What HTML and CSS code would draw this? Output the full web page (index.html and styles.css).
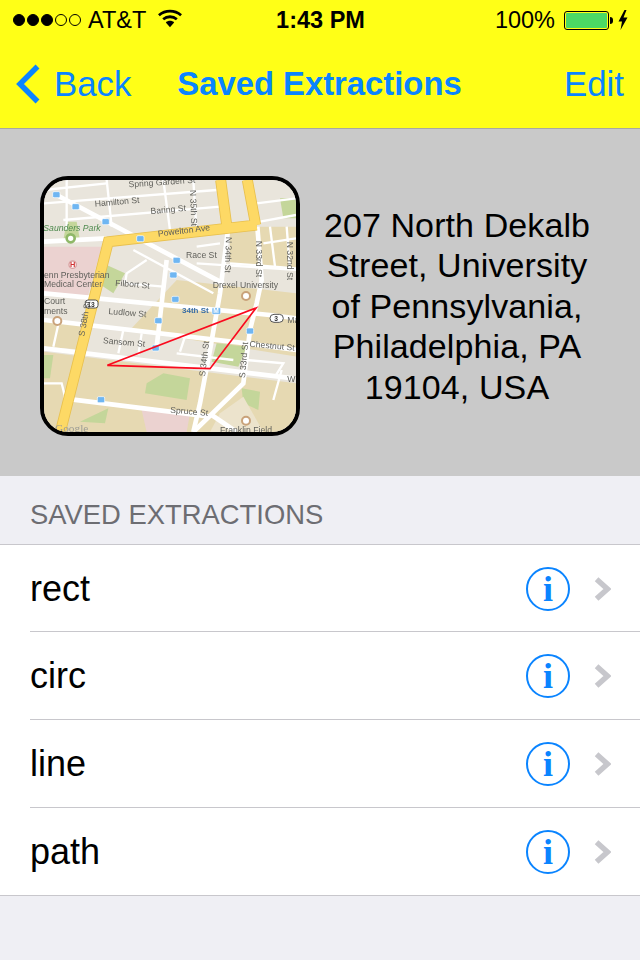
FILE: index.html
```html
<!DOCTYPE html>
<html lang="en">
<head>
<meta charset="utf-8">
<title>Saved Extractions</title>
<link rel="stylesheet" href="styles.css">
</head>
<body>
<div class="screen">
  <header class="top">
    <div class="status">
      <div class="status-left">
        <div class="signal"><i class="dot on"></i><i class="dot on"></i><i class="dot on"></i><i class="dot"></i><i class="dot"></i></div>
        <span class="carrier">AT&amp;T</span>
        <svg class="wifi" viewBox="0 0 26 20"><path d="M1 6.5C8 .6 18 .6 25 6.5" /><path d="M5.6 10.8C10 7.2 16 7.2 20.4 10.8" /><path class="wedge" d="M8.5 14.2C11 12 15 12 17.5 14.2L13 19.5Z"/></svg>
      </div>
      <div class="time">1:43 PM</div>
      <div class="status-right">
        <span class="pct">100%</span>
        <div class="battery"><div class="fill"></div></div>
        <div class="nub"></div>
        <svg class="bolt" viewBox="0 0 10 20"><path d="M6.5 0L0.5 11.5H4L2.5 20L9.5 7.5H5.5L8.5 0Z"/></svg>
      </div>
    </div>
    <nav class="nav">
      <a class="back"><svg class="chev" viewBox="0 0 26 40"><path d="M22.5 2.5L5 20L22.5 37.5"/></svg><span>Back</span></a>
      <h1 class="title">Saved Extractions</h1>
      <a class="edit">Edit</a>
    </nav>
  </header>

  <section class="hero">
    <div class="thumb">
      <svg class="map" viewBox="42 30 756 756">
        <rect class="m-bg" x="42" y="30" width="756" height="756"/>
        <path class="m-tan" d="M42 545L800 640V786H42Z"/>
        <path class="m-tan" d="M440 330L800 370V560L300 480Z"/>
        <path class="m-tan" d="M600 170H800V300L600 280Z"/>
        <path class="m-tan" d="M42 450L170 465V540L42 530Z"/>
        <path class="m-pink" d="M42 230H215L170 390L42 370Z"/>
        <path class="m-pink" d="M335 720L480 730L470 786H350Z"/>
        <path class="m-green" d="M750 85H798V145H760Z"/>
        <path class="m-green" d="M230 285L285 310L250 370L205 340Z"/>
        <path class="m-green" d="M560 520L650 530L625 590L545 575Z"/>
        <path class="m-green" d="M350 640L400 610L480 625L470 690L345 670Z"/>
        <path class="m-green" d="M635 655L690 665L685 720L640 700Z"/>
        <path class="m-green" d="M150 755L235 715L225 760Z"/>
        <path class="m-green" d="M42 555H70L60 625H42Z"/>
        <path class="m-green" d="M110 155H140L150 210H100Z"/>
        <path class="m-sand" d="M570 730L640 680L700 786H540Z"/>
        <g class="m-thin">
          <path d="M110 30V180M230 30L245 170M400 30L420 180M490 30L500 190"/>
          <path d="M42 100L560 60M100 150L570 110M42 60L230 40M720 170L735 290M770 170L780 300"/>
          <path d="M680 100L798 85M690 155L798 135M700 220L798 205M600 280L798 295"/>
          <path d="M310 240L550 370M350 270L290 310L285 340M290 340L400 350"/>
          <path d="M70 530L90 440M265 550L280 480M325 555L335 490M450 545L465 500M440 550L610 570M650 570L760 580L735 620"/>
          <path d="M500 280L800 300M500 230L570 220"/>
          <path d="M42 640H95L105 680M730 690L755 600"/>
        </g>
        <g class="m-road">
          <path d="M42 215L230 205M80 75L580 340M410 270L380 530"/>
          <path d="M42 370L720 435L800 445M42 450L650 520L800 540M42 535L790 625M100 685L540 740"/>
          <path d="M595 170L570 370L540 540L510 700L490 786"/>
          <path d="M682 170L695 330L680 400L660 480L640 640L490 786"/>
          <path d="M545 735L620 786"/>
        </g>
        <path class="m-yellow-e" d="M90 790L235 215L680 165M572 30L590 165M652 30L677 165"/>
        <path class="m-yellow" d="M90 790L235 215L680 165M572 30L590 165M652 30L677 165"/>
        <g class="m-pin">
          <rect x="68" y="65" width="22" height="18" rx="4"/><rect x="126" y="101" width="22" height="18" rx="4"/>
          <rect x="216" y="146" width="22" height="18" rx="4"/><rect x="320" y="197" width="22" height="18" rx="4"/>
          <rect x="429" y="262" width="22" height="18" rx="4"/><rect x="419" y="306" width="22" height="18" rx="4"/>
          <rect x="425" y="379" width="22" height="18" rx="4"/><rect x="374" y="443" width="22" height="18" rx="4"/>
          <rect x="366" y="525" width="22" height="18" rx="4"/><rect x="649" y="474" width="22" height="18" rx="4"/>
          <rect x="202" y="680" width="22" height="18" rx="4"/><rect x="546" y="413" width="26" height="20" rx="3"/>
        </g>
        <circle class="m-h" cx="128" cy="284" r="11"/>
        <circle class="m-poi" cx="648" cy="378" r="12"/><circle class="m-poi" cx="82" cy="453" r="12"/><circle class="m-poi" cx="648" cy="752" r="12"/>
        <circle class="m-park" cx="122" cy="205" r="12"/>
        <rect class="m-shield" x="166" y="390" width="38" height="24" rx="8"/>
        <rect class="m-shield" x="720" y="433" width="40" height="24" rx="12"/>
        <g class="m-label">
          <text x="296" y="52" transform="rotate(-4 296 52)">Spring Garden St</text>
          <text x="195" y="110" transform="rotate(-5 195 110)">Hamilton St</text>
          <text x="362" y="132" transform="rotate(-5 362 132)">Baring St</text>
          <text x="385" y="200" transform="rotate(-7 385 200)">Powelton Ave</text>
          <text x="468" y="264">Race St</text>
          <text x="255" y="347" transform="rotate(5 255 347)">Filbort St</text>
          <text x="235" y="432" transform="rotate(5 235 432)">Ludlow St</text>
          <text x="218" y="520" transform="rotate(5 218 520)">Sansom St</text>
          <text x="420" y="728" transform="rotate(5 420 728)">Spruce St</text>
          <text x="658" y="530" transform="rotate(5 658 530)">Chestnut St</text>
          <text x="548" y="354">Drexel University</text>
          <text x="42" y="323">enn Presbyterian</text>
          <text x="42" y="352">Medical Center</text>
          <text x="42" y="402">Court</text>
          <text x="42" y="431">ments</text>
          <text x="570" y="790">Franklin Field</text>
          <text x="772" y="635">W</text>
          <text x="772" y="458">Ma</text>
          <text x="480" y="60" transform="rotate(88 480 60)">N 35th St</text>
          <text x="588" y="200" transform="rotate(92 588 200)">N 34th St</text>
          <text x="678" y="212" transform="rotate(90 678 212)">N 33rd St</text>
          <text x="770" y="215" transform="rotate(90 770 215)">N 32nd St</text>
          <text x="163" y="500" transform="rotate(-80 163 500)">S 38th St</text>
          <text x="525" y="620" transform="rotate(-83 525 620)">S 34th St</text>
          <text x="645" y="625" transform="rotate(-85 645 625)">S 33rd St</text>
        </g>
        <text class="m-small" x="172" y="410">13</text>
        <text class="m-small" x="733" y="452">3</text>
        <text class="m-hosp" x="120" y="292">H</text>
        <text class="m-metro-m" x="550" y="430">M</text>
        <text class="m-park-label" x="40" y="182">Saunders Park</text>
        <text class="m-metro" x="456" y="428">34th St</text>
        <text class="m-google" x="75" y="785">Google</text>
        <path class="m-red" d="M232 586L678 414L540 596Z"/>
      </svg>
    </div>
    <p class="address">207 North Dekalb<br>Street, University<br>of Pennsylvania,<br>Philadelphia, PA<br>19104, USA</p>
  </section>

  <h2 class="section-title">SAVED EXTRACTIONS</h2>

  <ul class="list">
    <li class="row"><span class="name">rect</span><span class="info">i</span><svg class="disc" viewBox="0 0 16 24"><path d="M3 3L13 12L3 21"/></svg></li>
    <li class="row"><span class="name">circ</span><span class="info">i</span><svg class="disc" viewBox="0 0 16 24"><path d="M3 3L13 12L3 21"/></svg></li>
    <li class="row"><span class="name">line</span><span class="info">i</span><svg class="disc" viewBox="0 0 16 24"><path d="M3 3L13 12L3 21"/></svg></li>
    <li class="row"><span class="name">path</span><span class="info">i</span><svg class="disc" viewBox="0 0 16 24"><path d="M3 3L13 12L3 21"/></svg></li>
  </ul>
</div>
</body>
</html>
```
FILE: styles.css
```css
* { box-sizing: border-box; }
html, body { margin: 0; padding: 0; }
body { background: #efeff4; font-family: "Liberation Sans", Arial, sans-serif; color: #000; }
.screen { width: 640px; height: 960px; overflow: hidden; background: #efeff4; }

.top { height: 129px; background: #ffff17; border-bottom: 1px solid #a8a8a0; }
.status { height: 40px; display: grid; grid-template-columns: 1fr auto 1fr; align-items: center; padding: 0 12px 0 13px; font-size: 23.5px; }
.status-left { display: flex; align-items: center; }
.signal { display: flex; gap: 2px; margin-right: 7px; }
.dot { width: 12px; height: 12px; border-radius: 50%; border: 1px solid #000; }
.dot.on { background: #000; }
.carrier { margin-right: 12px; }
.wifi { width: 24px; height: 19px; margin-top: -3px; }
.wifi path { fill: none; stroke: #000; stroke-width: 3; }
.wifi .wedge { fill: #000; stroke: none; }
.time { font-weight: 700; font-size: 23.5px; }
.status-right { display: flex; align-items: center; justify-content: flex-end; }
.pct { margin-right: 9px; }
.battery { width: 45px; height: 19px; border: 1px solid #000; border-radius: 3px; padding: 1px; }
.fill { height: 100%; background: #4cd964; border-radius: 1px; }
.nub { width: 3px; height: 7px; background: #000; border-radius: 0 3px 3px 0; margin: 0 5px 0 1px; }
.bolt { width: 10px; height: 20px; }
.bolt path { fill: #000; }

.nav { height: 88px; display: grid; grid-template-columns: 1fr auto 1fr; align-items: center; padding: 0 16px 0 15px; color: #0a84ff; font-size: 34.8px; }
.back { display: flex; align-items: center; }
.chev { width: 26px; height: 40px; margin-right: 13px; }
.chev path { fill: none; stroke: #0a84ff; stroke-width: 5.5; }
.title { margin: 0; font-size: 32.8px; font-weight: 700; }
.edit { justify-self: end; }

.hero { height: 347px; background: #c9c9c9; display: flex; align-items: center; padding: 7px 40px 0; }
.thumb { width: 260px; height: 260px; flex: none; border: 4px solid #000; border-radius: 28px; overflow: hidden; background: #e9e5dc; }
.map { display: block; width: 252px; height: 252px; filter: blur(.35px); }
.address { flex: 1; margin: 0; font-size: 34px; letter-spacing: .1px; line-height: 40.5px; text-align: center; padding-left: 14px; white-space: nowrap; }

.m-bg { fill: #e9e5dc; }
.m-tan { fill: #e6d9b2; }
.m-pink { fill: #ebd2d0; }
.m-green { fill: #c4d69a; }
.m-sand { fill: #ece3cc; }
.m-thin path { fill: none; stroke: #fff; stroke-width: 7; }
.m-road path { fill: none; stroke: #fff; stroke-width: 14; }
.m-yellow-e { fill: none; stroke: #e8c04e; stroke-width: 33; }
.m-yellow { fill: none; stroke: #fdd965; stroke-width: 28; }
.m-pin rect { fill: #6fb6f2; stroke: #fff; stroke-width: 2; }
.m-h { fill: #fff; stroke: #d9a0a0; stroke-width: 4; }
.m-poi { fill: #fff; stroke: #c9a27a; stroke-width: 6; }
.m-park { fill: #fff; stroke: #8fb868; stroke-width: 8; }
.m-shield { fill: #fff; stroke: #555; stroke-width: 3; }
.m-small { font-size: 20px; font-weight: 700; fill: #333; font-family: "Liberation Sans", Arial, sans-serif; }
.m-hosp { font-size: 22px; font-weight: 700; fill: #d03030; font-family: "Liberation Sans", Arial, sans-serif; }
.m-metro-m { font-size: 20px; font-weight: 700; fill: #fff; font-family: "Liberation Sans", Arial, sans-serif; }
.m-label text { font-size: 26px; fill: #5f5f5a; font-family: "Liberation Sans", Arial, sans-serif; }
.m-park-label { font-size: 26px; fill: #4e8a4e; font-style: italic; font-family: "Liberation Sans", Arial, sans-serif; }
.m-metro { font-size: 24px; font-weight: 700; fill: #3a6ea5; font-family: "Liberation Sans", Arial, sans-serif; }
.m-google { font-size: 34px; fill: #9d9d96; font-family: "Liberation Serif", serif; }
.m-red { fill: none; stroke: #fa0a1e; stroke-width: 5; }

.section-title { margin: 0; height: 68px; padding: 23px 30px 0; font-size: 27.4px; line-height: 32px; font-weight: 400; color: #6d6d72; }

.list { list-style: none; margin: 0; padding: 0; background: #fff; border-top: 1px solid #c8c7cc; border-bottom: 1px solid #c8c7cc; }
.row { height: 88px; display: flex; align-items: center; margin-left: 30px; padding: 1px 29px 0 0; border-bottom: 1px solid #c8c7cc; }
.row:first-child { height: 87px; }
.row:last-child { border-bottom: 0; height: 87px; }
.name { flex: 1; font-size: 36px; }
.info { width: 44px; height: 44px; border: 2px solid #0a84ff; border-radius: 50%; color: #0a84ff; font-family: "Liberation Serif", serif; font-weight: 700; font-size: 36px; line-height: 40px; text-align: center; margin-right: 23px; }
.disc { width: 18px; height: 26px; }
.disc path { fill: none; stroke: #c7c7cc; stroke-width: 5; }
```
